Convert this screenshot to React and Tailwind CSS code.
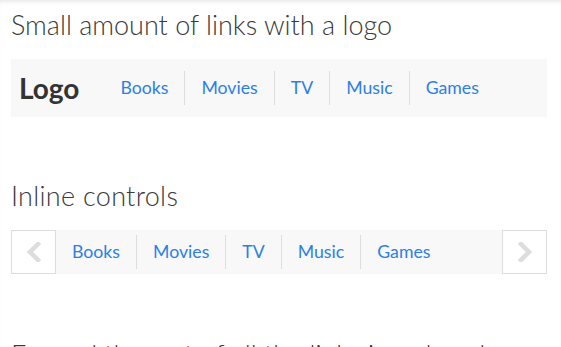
import React from "react";

const links = ["Books", "Movies", "TV", "Music", "Games"];

function Links() {
  return (
    <ul className="flex items-center">
      {links.map((l, i) => (
        <li
          key={l}
          className={
            "px-4 h-[34px] flex items-center " +
            (i > 0 ? "border-l border-[#dddddd]" : "")
          }
        >
          <a className="text-[17.7px] leading-[22px] text-[#2d7fe6]" href="#">
            {l}
          </a>
        </li>
      ))}
    </ul>
  );
}

function Chevron({ dir }) {
  return (
    <svg width="14" height="20" viewBox="0 0 14 20">
      <polyline
        points={dir === "left" ? "11,2 3,10 11,18" : "3,2 11,10 3,18"}
        fill="none"
        stroke="#dddddd"
        strokeWidth="4.5"
        strokeLinecap="square"
      />
    </svg>
  );
}

const headingFont = { fontFamily: "'Lato Light', Lato, 'Open Sans', sans-serif" };

export default function App() {
  return (
    <div
      className="w-[561px] h-[347px] overflow-hidden bg-white shadow-[inset_0_4px_5px_-3px_rgba(0,0,0,0.12)]"
      style={{ fontFamily: "Lato, 'Open Sans', sans-serif" }}
    >
      <div className="pl-[11px] pt-[9px] w-[547px]">
        <h2 className="text-[27px] leading-[32px] font-light text-[#3a3a3a]" style={headingFont}>
          Small amount of links with a logo
        </h2>
        <nav className="mt-[18px] h-[58px] bg-[#f8f8f8] flex items-center">
          <span className="pl-2 mr-[25px] text-[28px] leading-[34px] font-bold text-[#333333]">
            Logo
          </span>
          <Links />
        </nav>

        <h2 className="mt-[63px] text-[27px] leading-[32px] font-light text-[#3a3a3a] tracking-[0.3px]" style={headingFont}>
          Inline controls
        </h2>
        <nav className="mt-[18px] h-[44px] bg-[#f8f8f8] flex items-center justify-between">
          <div className="flex items-center h-full">
            <button className="w-[45px] h-[44px] bg-white border border-[#dddddd] flex items-center justify-center">
              <Chevron dir="left" />
            </button>
            <Links />
          </div>
          <button className="w-[45px] h-[44px] bg-white border border-[#dddddd] flex items-center justify-center">
            <Chevron dir="right" />
          </button>
        </nav>

        <h2 className="mt-[65px] text-[27px] leading-[32px] font-light text-[#3a3a3a] whitespace-nowrap" style={headingFont}>
          Expand the rest of all the links in a dropdown
        </h2>
      </div>
    </div>
  );
}
